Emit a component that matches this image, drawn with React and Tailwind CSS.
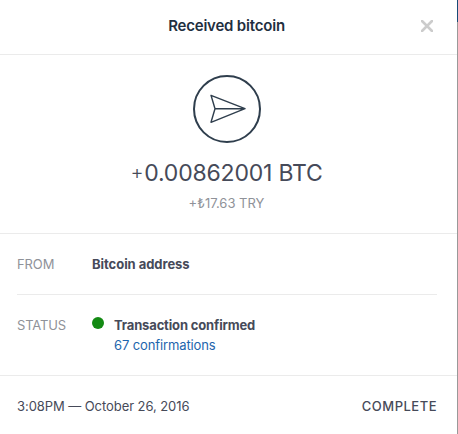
import React from 'react';

const App = () => {
  return (
    <div className="flex h-[434px] w-[458px] overflow-hidden bg-white font-['Inter',sans-serif] text-[13px] leading-5 text-[#464a59]">
      <div className="flex flex-1 flex-col">
        {/* Header */}
        <header className="flex h-[55px] items-center border-b border-[#ebebeb] pr-6 pl-8">
          <h2 className="flex-1 pb-[3px] text-center text-[15px] font-semibold tracking-[-0.2px] text-[#1f2f3f]">
            Received bitcoin
          </h2>
          <button aria-label="Close" className="pb-0.5">
            <svg className="h-3 w-3" viewBox="0 0 12 12" fill="none" stroke="#cccccc" strokeWidth="2.6" strokeLinecap="round">
              <path d="M1 1 11 11M11 1 1 11" />
            </svg>
          </button>
        </header>

        {/* Amount */}
        <section className="flex h-[179px] flex-col items-center border-b border-[#ebebeb] pt-5 pr-1">
          <svg className="h-[68px] w-[68px]" viewBox="0 0 68 68" fill="none" stroke="#2f3e4d">
            <circle cx="34" cy="34" r="33" strokeWidth="2" />
            <path d="M18 20.3 52 33.7 18 47.3 22 33.7ZM22 33.7H52" strokeWidth="1.4" strokeLinejoin="round" />
          </svg>
          <p className="mt-[15px] flex text-[23px] leading-[30px] tracking-[-0.2px] whitespace-nowrap">
            <span className="mr-px -mt-px text-[20px] font-light">+</span>0.00862001 BTC
          </p>
          <p className="mt-[5px] whitespace-nowrap text-[#8f9299]">+₺17.63 TRY</p>
        </section>

        {/* Details */}
        <section className="border-b border-[#ebebeb] pr-5 pl-[17px]">
          <div className="flex h-[61px] items-center border-b border-[#ebebeb]">
            <span className="w-[75px] tracking-[-0.1px] text-[#8f9299]">FROM</span>
            <span className="font-bold tracking-[-0.05px]">Bitcoin address</span>
          </div>
          <div className="flex h-20 items-start pt-5">
            <span className="w-[75px] tracking-[-0.15px] text-[#8f9299]">STATUS</span>
            <span className="mt-[2px] h-3 w-3 rounded-full bg-[#138a13]" />
            <div className="ml-[10px]">
              <p className="font-bold tracking-[-0.15px]">Transaction confirmed</p>
              <p className="tracking-[-0.12px] text-[#1d65ad]">67 confirmations</p>
            </div>
          </div>
        </section>

        {/* Footer */}
        <footer className="flex flex-1 items-start justify-between pt-5 pr-5 pl-[17px]">
          <span className="tracking-[-0.07px]">3:08PM — October 26, 2016</span>
          <span className="font-medium tracking-[0.5px]">COMPLETE</span>
        </footer>
      </div>

      {/* Page edge behind the panel */}
      <div className="flex w-px flex-col bg-[#999999]">
        <div className="h-[22px] bg-[#174b77]" />
      </div>
    </div>
  );
};

export default App;
